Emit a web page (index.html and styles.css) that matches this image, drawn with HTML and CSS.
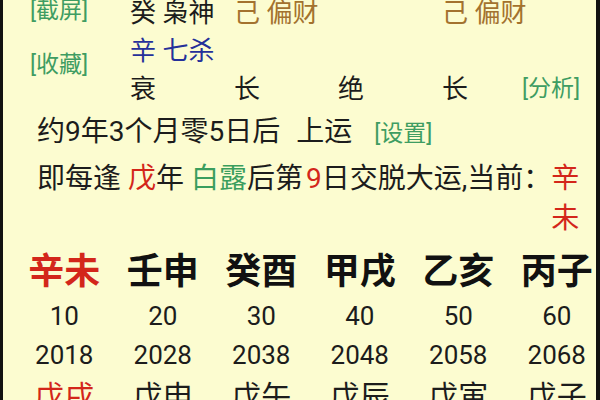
FILE: index.html
```html
<!DOCTYPE html>
<html lang="zh-CN">
<head>
<meta charset="utf-8">
<title>大运</title>
<link rel="stylesheet" href="styles.css">
</head>
<body>
<div class="screen">
  <div class="pillars">
    <div class="tag col1 row1">[截屏]</div>
    <div class="col2 row1">癸 枭神</div>
    <div class="col3 row1 brown">己 偏财</div>
    <div class="col5 row1 brown">己 偏财</div>
    <div class="col2 row2 blue">辛 七杀</div>
    <div class="tag col1 row23">[收藏]</div>
    <div class="col2 row3">衰</div>
    <div class="col3 row3">长</div>
    <div class="col4 row3">绝</div>
    <div class="col5 row3">长</div>
    <div class="tag col6 row3">[分析]</div>
  </div>

  <p class="start">约9年3个月零5日后<span class="shift">上运</span><span class="tag setting">[设置]</span></p>

  <p class="rule">即每逢<span class="red gap">戊</span>年<span class="green gap">白露</span>后第<span class="red gap-s">9</span>日交脱大运,当前：<span class="red current">辛未</span></p>

  <div class="luck big">
    <div class="red">辛未</div>
    <div>壬申</div>
    <div>癸酉</div>
    <div>甲戌</div>
    <div>乙亥</div>
    <div>丙子</div>
  </div>
  <div class="luck age">
    <div>10</div><div>20</div><div>30</div><div>40</div><div>50</div><div>60</div>
  </div>
  <div class="luck year">
    <div>2018</div><div>2028</div><div>2038</div><div>2048</div><div>2058</div><div>2068</div>
  </div>
  <div class="luck flow">
    <div class="red">戊戌</div><div>戊申</div><div>戊午</div><div>戊辰</div><div>戊寅</div><div>戊子</div>
  </div>
</div>
</body>
</html>
```

FILE: styles.css
```css
html, body {
  margin: 0;
  padding: 0;
  background: #fcfcd0;
  overflow: hidden;
}

.screen {
  box-sizing: border-box;
  width: 600px;
  height: 400px;
  overflow: hidden;
  background: #fcfcd0;
  border-left: 3px solid #111;
  border-right: 4px solid #111;
  color: #1c1c1c;
  font-family: Roboto, "Noto Sans CJK SC", sans-serif;
}

p { margin: 0; }

.pillars {
  display: grid;
  grid-template-columns: 127px 104px 104px 104px 80px 1fr;
  grid-template-rows: 38px 38px 38px;
  align-items: center;
  margin-top: -6px;
  font-size: 26px;
  line-height: 38px;
  white-space: nowrap;
}

.col1 { grid-column: 1; padding-left: 27px; }
.col2 { grid-column: 2; }
.col3 { grid-column: 3; }
.col4 { grid-column: 4; }
.col5 { grid-column: 5; }
.col6 { grid-column: 6; }
.row1 { grid-row: 1; }
.row2 { grid-row: 2; }
.row3 { grid-row: 3; }
.row23 { grid-row: 2 / 4; padding-bottom: 10px; }

.tag {
  color: #3f9d62;
  font-size: 23px;
}
.pillars .row1.tag { margin-top: -4px; }

.brown { color: #a3722e; }
.blue { color: #25309a; }
.red { color: #d3261a; }
.green { color: #3a9e5e; }

.start {
  margin-top: 3px;
  padding-left: 34px;
  font-size: 28px;
  line-height: 42px;
  white-space: nowrap;
}
.shift { margin-left: 16px; }
.setting { margin-left: 22px; }

.rule {
  margin-top: 4px;
  padding-left: 34px;
  font-size: 28px;
  line-height: 40px;
  white-space: nowrap;
}
.gap { margin-left: 7px; }
.gap-s { margin-left: 3px; }
.current {
  display: inline-block;
  width: 1em;
  white-space: normal;
  vertical-align: top;
}

.luck {
  display: grid;
  grid-template-columns: repeat(6, 98.5px);
  padding-left: 12px;
  text-align: center;
  white-space: nowrap;
}
.big {
  margin-top: 11px;
  font-size: 36px;
  font-weight: 700;
  line-height: 44px;
  color: #111;
}
.big .red { color: #d3261a; }
.age {
  font-size: 26px;
  line-height: 44px;
}
.year {
  font-size: 26px;
  line-height: 34px;
}
.flow {
  font-size: 30px;
  line-height: 50px;
}
```
